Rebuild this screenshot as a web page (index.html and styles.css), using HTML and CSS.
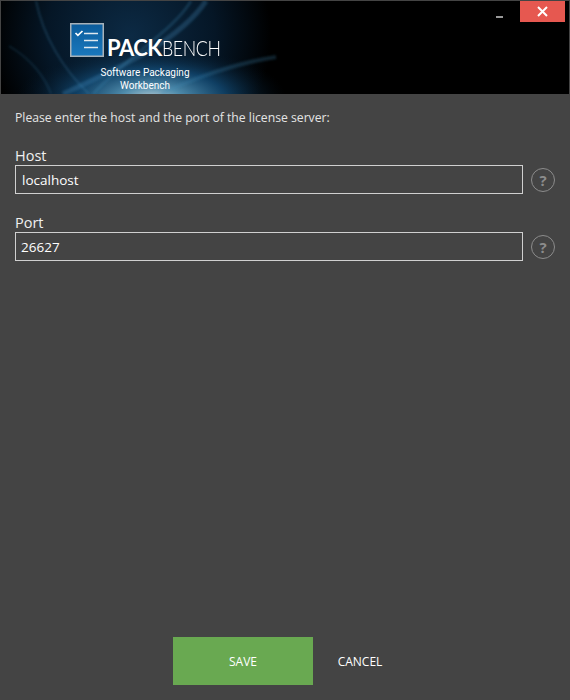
FILE: index.html
```html
<!DOCTYPE html>
<html lang="en">
<head>
  <meta charset="UTF-8">
  <meta name="viewport" content="width=device-width, initial-scale=1.0">
  <title>Packbench License Server</title>
  <link rel="stylesheet" href="styles.css">
</head>
<body>
  <header class="banner">
    <svg class="banner-art" width="290" height="93" viewBox="0 0 290 93" aria-hidden="true">
      <defs>
        <radialGradient id="glow" gradientUnits="userSpaceOnUse" cx="150" cy="96" r="135" gradientTransform="translate(0 60) scale(1 .38)">
          <stop offset="0" stop-color="#a9c3cf"/>
          <stop offset=".22" stop-color="#4f8bab"/>
          <stop offset=".55" stop-color="#124a74" stop-opacity=".8"/>
          <stop offset="1" stop-color="#04121f" stop-opacity="0"/>
        </radialGradient>
        <radialGradient id="haze" gradientUnits="userSpaceOnUse" cx="130" cy="35" r="140">
          <stop offset="0" stop-color="#0c2a44"/>
          <stop offset=".6" stop-color="#051626"/>
          <stop offset="1" stop-color="#000"/>
        </radialGradient>
        <filter id="soft" x="-10%" y="-10%" width="120%" height="120%">
          <feGaussianBlur stdDeviation="1.2"/>
        </filter>
      </defs>
      <rect width="290" height="93" fill="url(#haze)"/>
      <rect width="290" height="93" fill="url(#glow)"/>
      <g fill="none" stroke="#3f86b4" filter="url(#soft)">
        <path d="M205 0C178 40 120 66 62 93" stroke-width="5" stroke-opacity=".3"/>
        <path d="M190 0C172 30 130 52 92 93" stroke-width="3" stroke-opacity=".25"/>
        <path d="M35 0C42 35 62 68 88 93" stroke-width="2" stroke-opacity=".25"/>
        <path d="M8 45C30 58 44 76 50 93" stroke-width="2" stroke-opacity=".18"/>
        <path d="M275 56C235 62 190 78 160 93" stroke-width="4" stroke-opacity=".25"/>
      </g>
    </svg>
    <div class="brand">
      <div class="brand-mark">
        <svg class="brand-icon" width="34" height="34" viewBox="0 0 34 34" aria-hidden="true">
          <defs>
            <linearGradient id="tile" x1="0" y1="0" x2="0" y2="1">
              <stop offset="0" stop-color="#0b5c9c"/>
              <stop offset="1" stop-color="#1a78bd"/>
            </linearGradient>
          </defs>
          <rect x=".75" y=".75" width="32.500" height="32.500" fill="url(#tile)" stroke="#a7b2ba" stroke-width="1.500"/>
          <path d="M5.500 10l2.400 2.400L12.500 8" fill="none" stroke="#fff" stroke-width="1.700"/>
          <path d="M14 10.500h14M14 17.500h14M14 24.500h14" fill="none" stroke="#dfe8ee" stroke-width="1.500"/>
        </svg>
        <div class="wordmark"><b>PACK</b><span class="wordmark-light">BENCH</span></div>
      </div>
      <div class="tagline">Software Packaging<br>Workbench</div>
    </div>
    <div class="window-controls">
      <span class="minimize"></span>
      <span class="close">
        <svg width="11" height="11" viewBox="0 0 11 11" aria-hidden="true"><path d="M1 1l9 9M10 1l-9 9" stroke="#fff" stroke-width="2"/></svg>
      </span>
    </div>
  </header>

  <main class="content">
    <p class="intro">Please enter the host and the port of the license server:</p>

    <div class="field">
      <label for="host">Host</label>
      <div class="field-row">
        <input type="text" id="host" value="localhost">
        <span class="help">?</span>
      </div>
    </div>

    <div class="field">
      <label for="port">Port</label>
      <div class="field-row">
        <input type="text" id="port" value="26627">
        <span class="help">?</span>
      </div>
    </div>
  </main>

  <footer class="actions">
    <button class="btn btn-save">SAVE</button>
    <button class="btn btn-cancel">CANCEL</button>
  </footer>
</body>
</html>
```

FILE: styles.css
```css
html, body {
  height: 100%;
}
body {
  margin: 0;
  padding: 1px 1px 0;
  box-sizing: border-box;
  display: flex;
  flex-direction: column;
  background-color: #444444;
  color: #ffffff;
  font-family: "Open Sans", "Noto Sans", sans-serif;
}

/* Banner */
.banner {
  position: relative;
  display: flex;
  height: 93px;
  flex-shrink: 0;
  background-color: #000000;
}
.banner-art {
  position: absolute;
  left: 0;
  top: 0;
}
.brand {
  position: relative;
  padding: 22px 0 0 69px;
}
.brand-mark {
  display: flex;
  align-items: flex-end;
}
.brand-icon {
  display: block;
}
.wordmark {
  margin: 0 0 -2px 3px;
  font-family: Lato, sans-serif;
  font-size: 22px;
  line-height: 22px;
  font-weight: 300;
  letter-spacing: -0.5px;
  white-space: nowrap;
}
.wordmark b {
  font-weight: 700;
}
.wordmark-light {
  display: inline-block;
  transform: scaleX(0.81);
  transform-origin: left center;
}
.tagline {
  width: 150px;
  margin-top: 10px;
  font-family: Roboto, sans-serif;
  font-size: 10px;
  line-height: 12.500px;
  text-align: center;
}
.window-controls {
  position: relative;
  display: flex;
  margin-left: auto;
  margin-right: 4px;
  align-items: flex-start;
}
.minimize {
  width: 7px;
  height: 2px;
  margin: 15px 17px 0 0;
  background-color: #999999;
}
.close {
  display: flex;
  align-items: center;
  justify-content: center;
  width: 45px;
  height: 21px;
  background-color: #e65850;
}

/* Form */
.content {
  flex-grow: 1;
  padding: 0 14px;
}
.intro {
  margin: 15px 0 0;
  font-size: 12.2px;
  line-height: 18px;
  color: #e4e4e4;
}
.field {
  margin-top: 20px;
}
label {
  display: block;
  font-size: 14.5px;
  line-height: 18px;
  color: #f0f0f0;
}
.field-row {
  display: flex;
  align-items: center;
}
input {
  width: 508px;
  height: 29px;
  padding: 1px 5px 0 6px;
  box-sizing: border-box;
  font-family: inherit;
  font-size: 13.5px;
  color: #ffffff;
  background-color: transparent;
  border: 1px solid #d0d0d0;
  border-radius: 0;
  outline: none;
}
#port {
  padding-left: 5px;
}
.help {
  display: flex;
  align-items: center;
  justify-content: center;
  width: 24px;
  height: 24px;
  margin-left: 8px;
  box-sizing: border-box;
  border: 1px solid #8c8c8c;
  border-radius: 50%;
  font-size: 15px;
  font-weight: 700;
  color: #8c8c8c;
}

/* Buttons */
.actions {
  display: flex;
  flex-shrink: 0;
  padding: 0 0 15px 172px;
}
.btn {
  height: 48px;
  padding: 0;
  font-family: inherit;
  font-size: 12px;
  color: #ffffff;
  background: none;
  border: none;
  cursor: pointer;
}
.btn-save {
  width: 140px;
  background-color: #69a951;
}
.btn-cancel {
  width: 94px;
}
```
